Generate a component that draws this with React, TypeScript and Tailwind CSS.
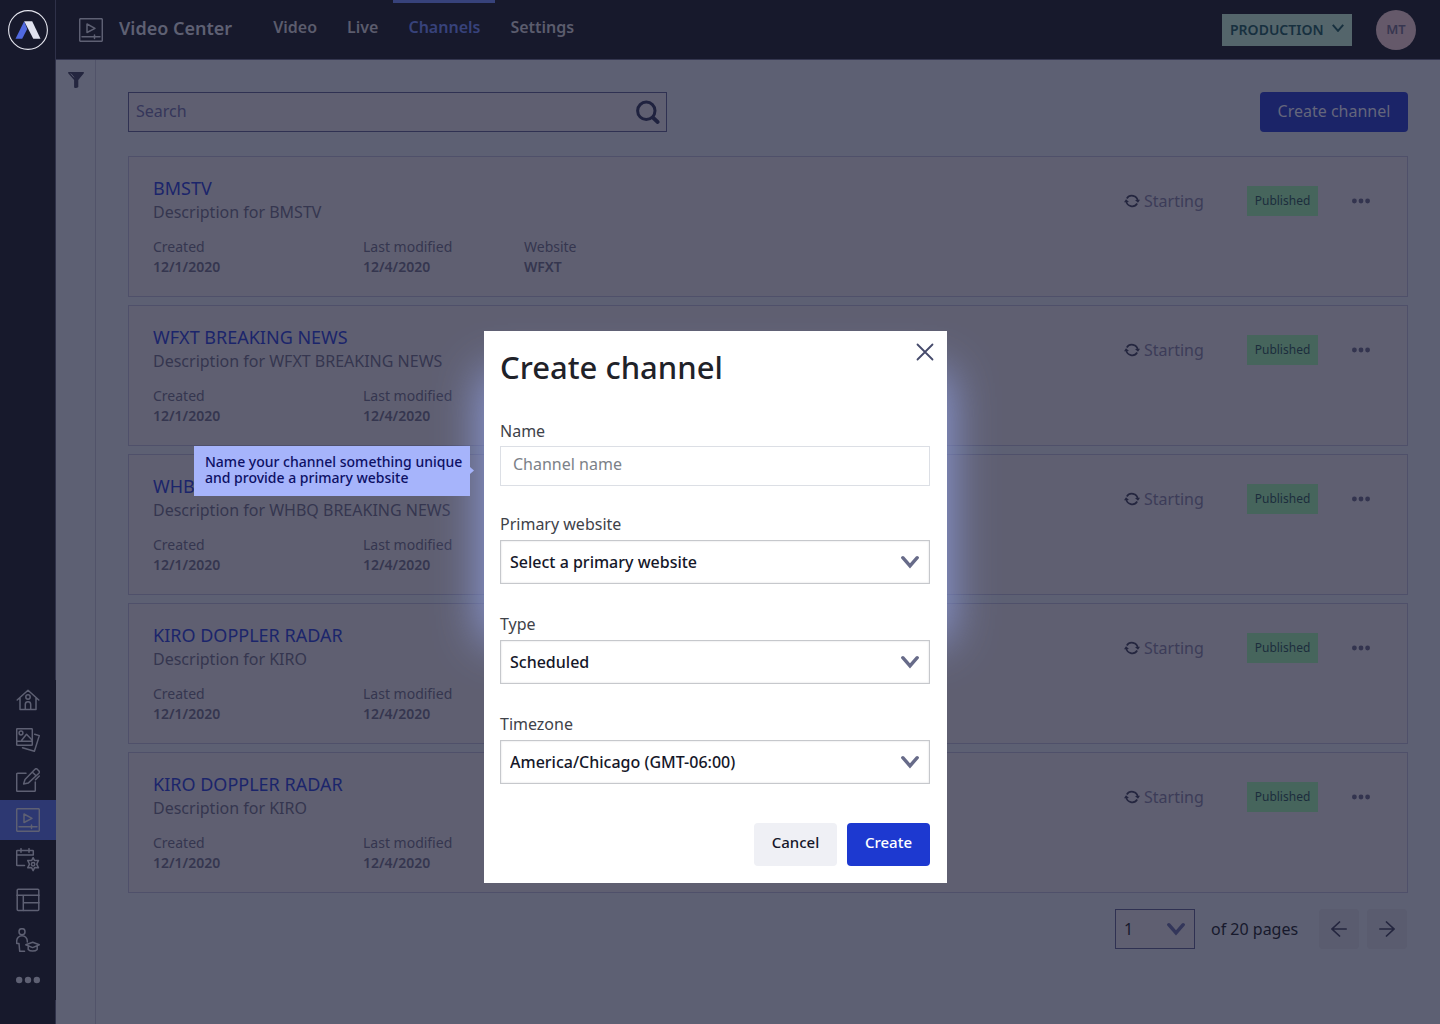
import { useState, type ReactNode } from 'react'

const channels = [
    { title: 'BMSTV', description: 'Description for BMSTV', website: 'WFXT' },
    { title: 'WFXT BREAKING NEWS', description: 'Description for WFXT BREAKING NEWS' },
    { title: 'WHBQ BREAKING NEWS', description: 'Description for WHBQ BREAKING NEWS' },
    { title: 'KIRO DOPPLER RADAR', description: 'Description for KIRO' },
    { title: 'KIRO DOPPLER RADAR', description: 'Description for KIRO' }
]

function LineIcon({ children }: { children: ReactNode }) {
    return (
        <svg className="w-6 h-6" fill="none" stroke="currentColor" strokeWidth={1.5} strokeLinecap="round" strokeLinejoin="round" viewBox="0 0 24 24">
            {children}
        </svg>
    )
}

function PlayerIcon() {
    return (
        <LineIcon>
            <rect x="0.7" y="0.7" width="22.6" height="22.6" rx="1" />
            <path d="M8 6v8.5l8-4.2zM3 18.7h18M15.5 17v3.500" />
        </LineIcon>
    )
}

function HomeIcon() {
    return (
        <LineIcon>
            <path d="M1.2 12 12 2.3 22.8 12M4 10v11.5h16V10M9.3 21.5v-5a2.7 2.7 0 0 1 5.4 0v5" />
            <circle cx="12" cy="9" r="2.2" />
        </LineIcon>
    )
}

function PhotosIcon() {
    return (
        <LineIcon>
            <rect x="0.7" y="0.7" width="15.6" height="16.6" rx="0.8" />
            <path d="M0.7 13.3h15.6M5.7 12.3l4.8-6 5.8 6M18.7 6.2l4.6 1.4-4.9 15.7-11.9-3.6" />
            <circle cx="5" cy="5" r="1.9" />
        </LineIcon>
    )
}

function EditIcon() {
    return (
        <LineIcon>
            <path d="M10 5.3H1.6a.9.9 0 0 0-.9.9v16.2c0 .5.4.9.9.9h16.8c.5 0 .9-.4.9-.9V14" />
            <path d="M7.6 15.9 9 11.5 19 1.2a1.6 1.6 0 0 1 2.3 0l1.6 1.7a1.6 1.6 0 0 1 0 2.3L12.2 15.100zM16.3 4l3.7 3.800M19.5 11.8l3.8-3.800" />
        </LineIcon>
    )
}

function CalendarIcon() {
    return (
        <LineIcon>
            <path d="M8.500 17.5H1.3a.6.6 0 0 1-.6-.6V3.1c0-.4.3-.6.6-.6h15.4c.4 0 .6.2.6.6v4M.7 7h16.6M5 .7v3.500M13 .7v3.500" />
            <path d="m17.100 9.700 1.500 2.900 3.900-.2-1.800 3.800 1.800 3.600-3.900-.2-1.500 3-1.500-3-3.900.2 1.800-3.600-1.800-3.800 3.900.2z" />
            <circle cx="17.1" cy="16.2" r="1.7" />
        </LineIcon>
    )
}

function LayoutIcon() {
    return (
        <LineIcon>
            <rect x="1.2" y="1.2" width="21.6" height="21.2" rx="1" />
            <path d="M1 7.3h22M7.3 7.3v15.2M7.3 14.8H23" />
        </LineIcon>
    )
}

function TrainingIcon() {
    return (
        <LineIcon>
            <circle cx="6" cy="3.7" r="3" />
            <path d="M8.5 23.3H3.7L3 15.5H.7V13a5.3 5.3 0 0 1 10.6 0v1M9.800 16.800l6.900-2.600 6.600 2.600-6.600 2.800zM12.2 18.2v3.2c2 2.2 7 2.2 9 0v-3.2" />
        </LineIcon>
    )
}

function Dots({ className }: { className: string }) {
    return (
        <svg className={className} fill="currentColor" viewBox="0 0 24 8">
            <circle cx="3.2" cy="4" r="3.2" />
            <circle cx="12" cy="4" r="3.2" />
            <circle cx="20.8" cy="4" r="3.2" />
        </svg>
    )
}

function Chevron({ className }: { className: string }) {
    return (
        <svg className={className} fill="none" stroke="currentColor" strokeWidth={3.4} viewBox="0 0 18 14">
            <path strokeLinecap="round" d="M1.8 2.7 9 10.900l7.2-8.2" />
        </svg>
    )
}

const sideLinks = [
    { label: 'Home', icon: <HomeIcon /> },
    { label: 'Photos', icon: <PhotosIcon /> },
    { label: 'Composer', icon: <EditIcon /> },
    { label: 'Video Center', icon: <PlayerIcon />, active: true },
    { label: 'Planning', icon: <CalendarIcon /> },
    { label: 'Layouts', icon: <LayoutIcon /> },
    { label: 'Training', icon: <TrainingIcon /> },
    { label: 'More', icon: <Dots className="w-6 h-2" /> }
]

function Sidebar() {
    return (
        <aside className="w-14 shrink-0 flex flex-col justify-between bg-[#17192c] border-r border-[#2f3149] pt-[10px] pb-6">
            <a href="#home" aria-label="Home" className="pl-2">
                <svg className="w-10 h-10" viewBox="0 0 40 40">
                    <circle cx="20" cy="20" r="19.4" fill="none" stroke="#e4e5ee" strokeWidth="1.1" />
                    <path fill="#5069e0" d="M16.2 11.2 7.5 28.8h6.7l5-9.8z" />
                    <path fill="#e0e2ef" d="M16.2 11.2h8l8.3 17.6h-7.2z" />
                </svg>
            </a>
            <nav className="-mr-px">
                {sideLinks.map((link) => (
                    <a
                        key={link.label}
                        href="#section"
                        aria-label={link.label}
                        className={`flex h-10 items-center justify-center text-[#5e6073] ${link.active ? 'bg-[#2d3872]' : 'bg-[#17192c]'}`}
                    >
                        {link.icon}
                    </a>
                ))}
            </nav>
        </aside>
    )
}

function Header() {
    return (
        <header className="flex h-[60px] items-center bg-[#17192c] border-b border-[#34364f] pl-[23px] pr-6">
            <div className="flex items-center gap-4 text-[#5e6073]">
                <PlayerIcon />
                <h1 className="pb-1 text-lg font-semibold">Video Center</h1>
            </div>
            <nav className="ml-[26px] flex h-full text-base font-semibold text-[#5b5c6d]">
                <a href="#video" className="border-t-[3px] border-transparent px-[15px] pt-3">Video</a>
                <a href="#live" className="border-t-[3px] border-transparent px-[15px] pt-3">Live</a>
                <a href="#channels" className="border-t-[3px] border-[#37427b] px-[15px] pt-3 text-[#37427b]">Channels</a>
                <a href="#settings" className="border-t-[3px] border-transparent px-[15px] pt-3">Settings</a>
            </nav>
            <div className="relative ml-auto">
                <select aria-label="Environment" className="h-8 w-[130px] appearance-none bg-[#54656b] pl-2 text-sm font-semibold text-[#17303f]">
                    <option>PRODUCTION</option>
                </select>
                <svg className="pointer-events-none absolute right-2 top-[10px] h-2 w-3 text-[#17303f]" fill="none" stroke="currentColor" strokeWidth={2} viewBox="0 0 12 8">
                    <path d="m.8.8 5.2 6 5.2-6" />
                </svg>
            </div>
            <button className="ml-6 h-10 w-10 rounded-full bg-[#65596a] text-[13px] font-semibold text-[#373650]">MT</button>
        </header>
    )
}

function ChannelCard({ title, description, website }: { title: string, description: string, website?: string }) {
    return (
        <article className="flex justify-between border border-[#4f506a] bg-[#5f5f71] pb-[19px] pl-6 pr-[37px] pt-[19px]">
            <div>
                <h2 className="text-lg leading-6">
                    <a href="#channel" className="text-[#1b256b]">{title}</a>
                </h2>
                <p className="text-base leading-6 text-[#35364f]">{description}</p>
                <dl className="mt-[13px] grid grid-cols-[210px_161px_auto] text-sm leading-5 text-[#35364f]">
                    <div>
                        <dt>Created</dt>
                        <dd className="font-semibold">12/1/2020</dd>
                    </div>
                    <div>
                        <dt>Last modified</dt>
                        <dd className="font-semibold">12/4/2020</dd>
                    </div>
                    {website && (
                        <div>
                            <dt>Website</dt>
                            <dd className="font-semibold">{website}</dd>
                        </div>
                    )}
                </dl>
            </div>
            <div className="mt-[10px] flex h-[30px] items-center">
                <svg className="h-4 w-4 text-[#24263f]" fill="none" stroke="currentColor" strokeWidth={1.7} viewBox="0 0 16 16">
                    <path d="M2.800 5.500A6 6 0 0 1 13.800 8M13.200 10.500A6 6 0 0 1 2.200 8" />
                    <path fill="currentColor" stroke="none" d="M0 9.200 2 6.200 5 9zM16 6.800l-2 3L11 7z" />
                </svg>
                <span className="ml-1 w-16 text-base text-[#3c3c58]">Starting</span>
                <span className="ml-[39px] flex h-[30px] w-[71px] items-center justify-center bg-[#46655c] text-xs text-[#1c2d3d]">Published</span>
                <button aria-label="Channel actions" className="ml-[34px] text-[#33344f]">
                    <Dots className="h-[6px] w-[18px]" />
                </button>
            </div>
        </article>
    )
}

function Pagination() {
    return (
        <div className="mt-4 flex items-center justify-end pr-px">
            <div className="relative">
                <select aria-label="Page" className="h-10 w-20 appearance-none border border-[#2f3152] bg-[#5f5f71] pl-2 text-base text-[#17192c]">
                    <option>1</option>
                </select>
                <Chevron className="pointer-events-none absolute right-[10px] top-[13px] h-[14px] w-[18px] text-[#33365a]" />
            </div>
            <span className="ml-4 w-[92px] text-base text-[#17192c]">of 20 pages</span>
            <button aria-label="Previous page" className="ml-4 flex h-10 w-10 items-center justify-center rounded bg-[#5a5c6f] text-[#24263f]">
                <svg className="h-4 w-4" fill="none" stroke="currentColor" strokeWidth={1.7} strokeLinecap="round" viewBox="0 0 16 16">
                    <path d="M15.2 8H1M8.5 1 1 8l7.5 7" />
                </svg>
            </button>
            <button aria-label="Next page" className="ml-2 flex h-10 w-10 items-center justify-center rounded bg-[#5a5c6f] text-[#24263f]">
                <svg className="h-4 w-4" fill="none" stroke="currentColor" strokeWidth={1.7} strokeLinecap="round" viewBox="0 0 16 16">
                    <path d="M.8 8H15M7.5 1 15 8l-7.5 7" />
                </svg>
            </button>
        </div>
    )
}

function SelectField({ id, label, value }: { id: string, label: string, value: string }) {
    return (
        <div>
            <label htmlFor={id} className="mb-1 block text-base leading-6 text-[#404249]">{label}</label>
            <div className="relative">
                <select id={id} className="block h-11 w-full appearance-none border border-[#c6c8cc] bg-white pl-[9px] text-base font-medium text-[#151729] shadow-[inset_0_0_2px_#d5d6da]">
                    <option>{value}</option>
                </select>
                <Chevron className="pointer-events-none absolute right-[11px] top-[15px] h-[14px] w-[18px] text-[#676b89]" />
            </div>
        </div>
    )
}

function CreateChannelModal() {
    const [name, setName] = useState('')

    return (
        <div className="fixed inset-0 flex items-start justify-center pr-[9px] pt-[331px]">
            <div className="relative w-[463px]">
                {/* Glow behind the dialog */}
                <div className="absolute inset-x-0 top-[42px] bottom-[244px] shadow-[0_0_44px_2px_#8f9ddd]" />

                <form role="dialog" aria-label="Create channel" className="relative bg-white pb-[17px] pl-4 pr-[17px] pt-4" onSubmit={(e) => e.preventDefault()}>
                    <h2 className="text-[31px] font-medium leading-10 text-[#1f2229]">Create channel</h2>
                    <button type="button" aria-label="Close" className="absolute right-[13px] top-[12px] text-[#454a6b]">
                        <svg className="h-[18px] w-[18px]" fill="none" stroke="currentColor" strokeWidth={1.8} strokeLinecap="round" viewBox="0 0 18 18">
                            <path d="m1.5 1.5 15 15M16.5 1.5l-15 15" />
                        </svg>
                    </button>

                    <div className="mt-8 mb-[26px]">
                        <label htmlFor="name" className="mb-[3px] block text-base leading-6 text-[#404249]">Name</label>
                        <input
                            id="name"
                            type="text"
                            value={name}
                            onChange={(e) => setName(e.target.value)}
                            placeholder="Channel name"
                            className="block h-10 w-full border border-[#dcdfe5] px-3 pb-1 text-base placeholder:text-[#7c8188]"
                        />
                    </div>

                    <div className="flex flex-col gap-7">
                        <SelectField id="website" label="Primary website" value="Select a primary website" />
                        <SelectField id="type" label="Type" value="Scheduled" />
                        <SelectField id="timezone" label="Timezone" value="America/Chicago (GMT-06:00)" />
                    </div>

                    <div className="mt-[39px] flex justify-end gap-[10px]">
                        <button type="button" className="h-[43px] w-[83px] rounded bg-[#eff0f5] pb-1 text-[15px] font-medium text-[#151729]">Cancel</button>
                        <button type="submit" className="h-[43px] w-[83px] rounded bg-[#1d39d0] pb-1 text-[15px] font-medium text-white">Create</button>
                    </div>
                </form>

                {/* Hint */}
                <div role="tooltip" className="absolute right-[477px] top-[115px] h-[50px] w-[276px] bg-[#a6b4fb] pl-[11px] pt-2 text-sm font-medium leading-4 text-[#0d1065]">
                    Name your channel something unique<br />
                    and provide a primary website
                    <svg className="absolute -right-1 top-[21px] h-[7px] w-1" viewBox="0 0 4 7">
                        <path fill="#a6b4fb" d="M0 0l4 3.5L0 7z" />
                    </svg>
                </div>
            </div>
        </div>
    )
}

export default function App() {
    return (
        <div className="flex min-h-screen bg-[#5d6073] font-['Noto_Sans',sans-serif]">
            <Sidebar />
            <div className="flex min-w-0 flex-1 flex-col">
                <Header />
                <div className="flex flex-1">
                    <div className="flex w-10 shrink-0 items-start justify-center border-r border-[#515369] pt-3">
                        <button aria-label="Filter" className="text-[#24263f]">
                            <svg className="h-4 w-4" fill="currentColor" viewBox="0 0 16 16">
                                <path d="M.4 0h15.2c.5.6.5 1-.2 1.7L10.3 8v7c-1 .8-3.4 1.4-4.2.6V8L.6 1.7C0 1 0 .6.4 0z" />
                                <path fill="none" stroke="#5d6073" strokeWidth="0.8" d="M2.8 1.5 6 5.3" />
                            </svg>
                        </button>
                    </div>
                    <main className="min-w-0 flex-1 px-8 pt-8">
                        <div className="mb-6 flex justify-between">
                            <div className="relative w-[539px]">
                                <input type="search" aria-label="Search" placeholder="Search" className="block h-10 w-full border border-[#2f3152] bg-[#5f5f71] px-[7px] pb-[3px] text-base placeholder:text-[#35365a]" />
                                <svg className="pointer-events-none absolute right-[7px] top-2 h-6 w-6 text-[#1f223f]" fill="none" stroke="currentColor" strokeWidth={3} viewBox="0 0 24 24">
                                    <circle cx="10.3" cy="10.8" r="8.7" />
                                    <path strokeWidth={4} strokeLinecap="round" d="m17 17.600 4.500 4.300" />
                                </svg>
                            </div>
                            <button className="h-10 w-[148px] rounded bg-[#1b2468] pb-[3px] text-base text-[#64667c]">Create channel</button>
                        </div>
                        <div className="flex flex-col gap-2">
                            {channels.map((channel, index) => (
                                <ChannelCard key={index} {...channel} />
                            ))}
                        </div>
                        <Pagination />
                    </main>
                </div>
            </div>
            <CreateChannelModal />
        </div>
    )
}
